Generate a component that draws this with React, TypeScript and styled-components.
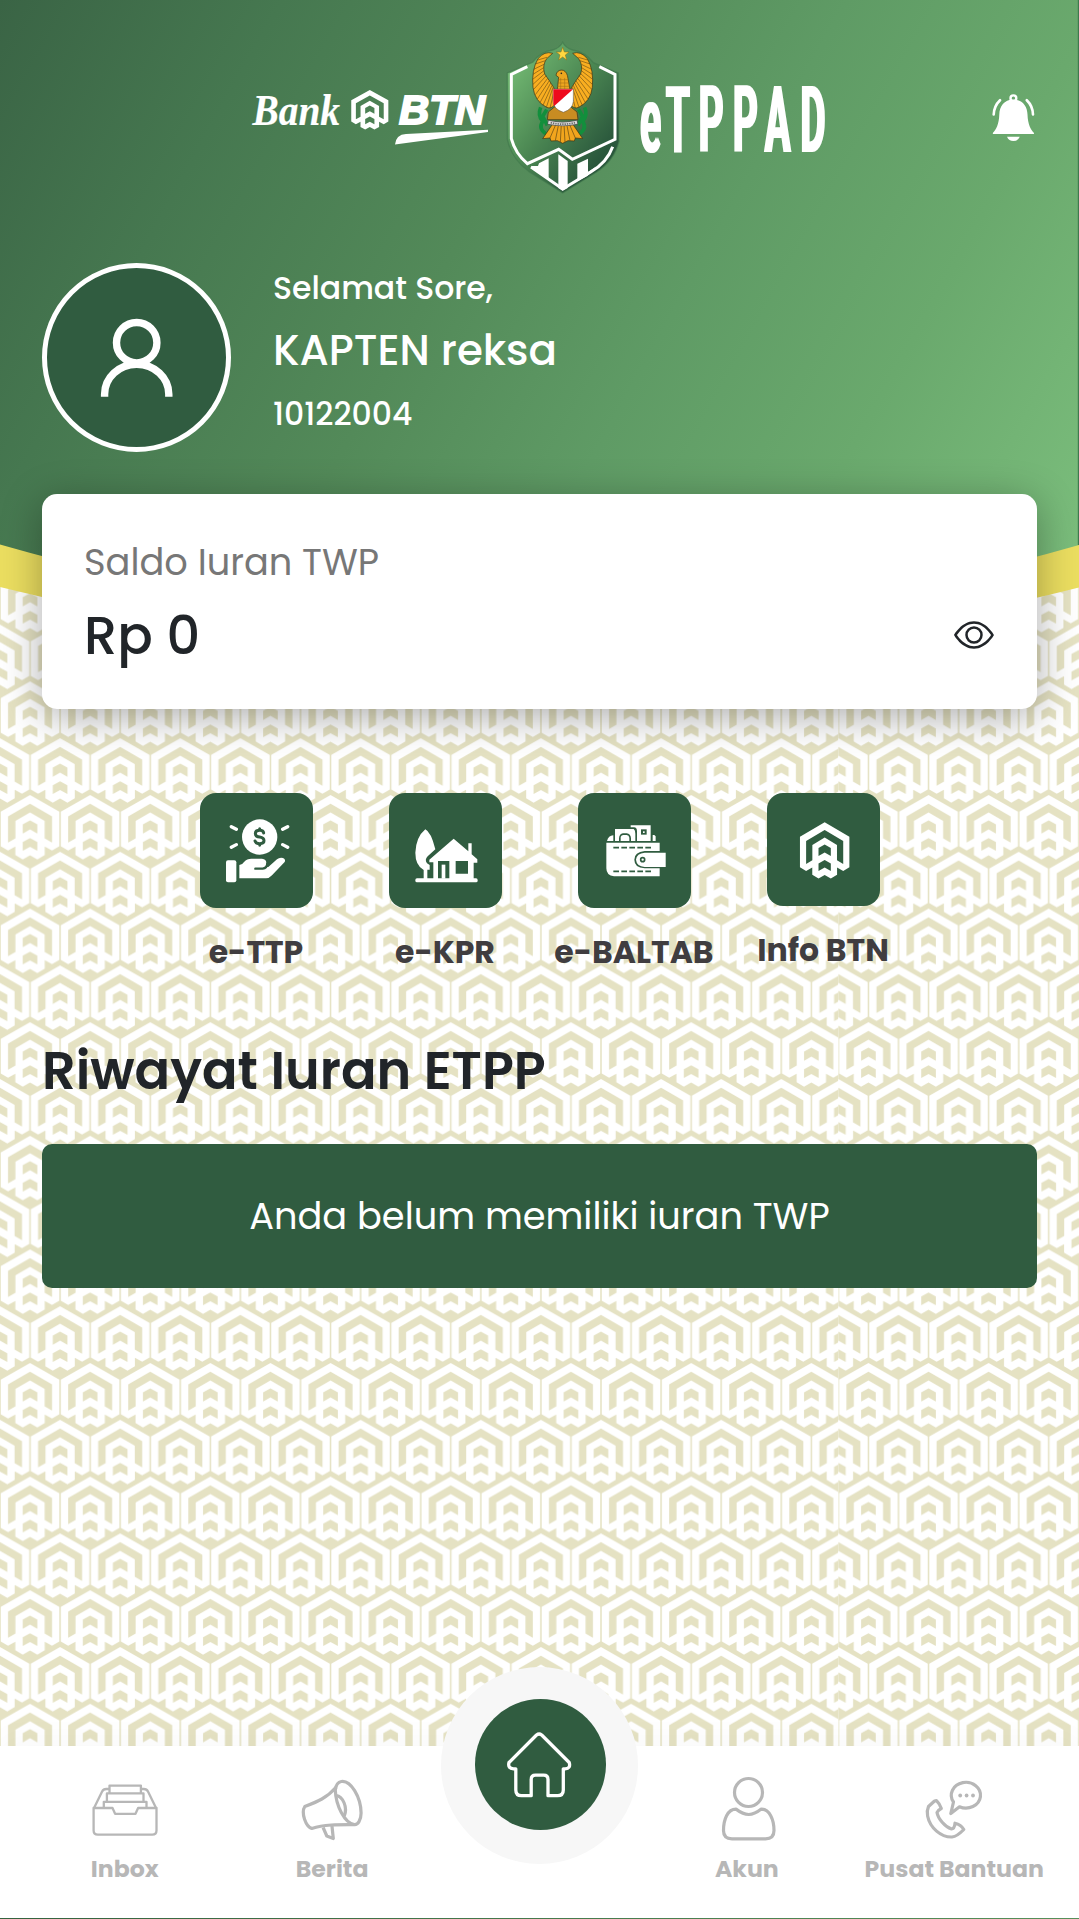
import React from "react";
import styled, { createGlobalStyle } from "styled-components";
import { BsEye } from "react-icons/bs";

const GREEN = "#305c40";

const GlobalStyle = createGlobalStyle`
  *, *::before, *::after { box-sizing: border-box; }
  body {
    margin: 0;
    font-family: Poppins, Inter, "Liberation Sans", sans-serif;
    color: #212529;
  }
  svg { display: block; }
`;

const Page = styled.div`
  position: relative;
  width: 1079px;
  height: 1919px;
  overflow: hidden;
  display: flex;
  flex-direction: column;
`;

const Backdrop = styled.svg`
  position: absolute;
  inset: 0;
`;

const Content = styled.div`
  position: relative;
  flex: 1;
  display: flex;
  flex-direction: column;
  padding: 0 42px;
`;

const TopBar = styled.header`
  height: 236px;
  display: grid;
  grid-template-columns: 1fr auto 1fr;
  align-items: center;
`;

const BellButton = styled.button`
  grid-column: 3;
  justify-self: end;
  margin-right: 2.5px;
  padding: 0;
  border: 0;
  background: none;
`;

const Brand = styled.div`
  grid-column: 2;
  margin: 0 1px 0 -1px;
`;

const Profile = styled.section`
  display: flex;
  gap: 42px;
  margin-top: 26.7px;
  height: 189px;
`;

const Avatar = styled.div`
  width: 189px;
  height: 189px;
  border-radius: 50%;
  border: 5px solid #fff;
  background: ${GREEN};
`;

const ProfileText = styled.div`
  display: flex;
  flex-direction: column;
  align-items: flex-start;
  padding-top: 2.3px;
  color: #fff;
`;

const Text = styled.span<{ $size: number; $line: number; $weight?: number; $top?: number; $color?: string }>`
  display: block;
  width: max-content;
  white-space: nowrap;
  font-size: ${(p) => p.$size}px;
  line-height: ${(p) => p.$line}px;
  font-weight: ${(p) => p.$weight ?? 400};
  margin-top: ${(p) => p.$top ?? 0}px;
  color: ${(p) => p.$color ?? "inherit"};
`;

const BalanceCard = styled.section`
  display: flex;
  justify-content: space-between;
  margin-top: 42px;
  height: 215px;
  padding: 41.3px 43.5px 0 42px;
  border-radius: 15px;
  background: #fff;
  box-shadow: 0 8px 42px rgba(0, 0, 0, 0.33);
`;

const EyeButton = styled.button`
  align-self: flex-start;
  margin-top: 80.5px;
  padding: 0;
  border: 0;
  background: none;
  color: #212529;
`;

const Shortcuts = styled.nav`
  display: flex;
  justify-content: center;
  margin-top: 84px;
`;

const Shortcut = styled.a`
  width: 189px;
  display: flex;
  flex-direction: column;
  align-items: center;
  color: #403d40;
`;

const Tile = styled.div<{ $height: number }>`
  width: 113px;
  height: ${(p) => p.$height}px;
  border-radius: 16px;
  background: ${GREEN};
`;

const Notice = styled.div`
  display: flex;
  align-items: center;
  justify-content: center;
  margin-top: 42.6px;
  height: 143.6px;
  border-radius: 10px;
  background: ${GREEN};
  color: #fff;
`;

const BottomNav = styled.nav`
  position: relative;
  display: grid;
  grid-template-columns: repeat(5, 1fr);
  height: 172px;
  padding: 30px 21px 0;
  background: #fff;
  color: #b7b7b7;
  box-shadow: 0 -6px 30px rgba(0, 0, 0, 0.03);
`;

const NavItem = styled.a`
  display: flex;
  flex-direction: column;
  align-items: center;
`;

const HomeBump = styled.a`
  display: flex;
  align-items: center;
  justify-content: center;
  justify-self: center;
  margin-top: -109px;
  padding: 0 0 2.5px 2.5px;
  width: 197px;
  height: 197px;
  border-radius: 50%;
  background: #f7f7f7;
`;

const HomeDisc = styled.div`
  display: flex;
  align-items: center;
  justify-content: center;
  padding-right: 3px;
  width: 131.5px;
  height: 131.5px;
  border-radius: 50%;
  background: ${GREEN};
`;

const BottomEdge = styled.div`
  position: relative;
  height: 1px;
  background: linear-gradient(90deg, #35633f, #57905a);
`;

const HIVE =
  "M0 0L29.3 16.7V51.3L22 55.6L14.7 51.6V60L7.3 64.4L0 60.3L-7.3 64.4L-14.7 60V51.6L-22 55.6L-29.3 51.3V16.7Z" +
  "M0 8.8L22 21.5V47.6L14.6 43.3V26L0 17.4L-14.6 26V43.3L-22 47.6V21.5Z" +
  "M0 25.4L7.3 29.4V38.5L0 34.5L-7.3 38.5V29.4Z" +
  "M0 43.2L7.3 47.2V55.8L0 51.8L-7.3 55.8V47.2Z";

const Hive = ({ transform }: { transform?: string }) => (
  <path d={HIVE} fillRule="evenodd" fill="#fff" transform={transform} />
);

const HivePattern = ({ id, x }: { id: string; x: number }) => (
  <pattern id={id} width="60.1" height="113.6" patternUnits="userSpaceOnUse" patternTransform={`translate(${x} 56.6)`}>
    <rect width="60.1" height="113.6" fill="#e5e2c3" />
    <Hive />
    <Hive transform="translate(60.1 0)" />
    <Hive transform="translate(30.05 56.8)" />
    <Hive transform="translate(30.05 -56.8)" />
  </pattern>
);

const PageBackdrop = () => (
  <Backdrop width="1079" height="1919" viewBox="0 0 1079 1919">
    <defs>
      <HivePattern id="hiveA" x={0} />
      <HivePattern id="hiveB" x={838.4} />
      <linearGradient id="sky" gradientUnits="userSpaceOnUse" x1="0" y1="0" x2="1079" y2="600">
        <stop offset="0" stopColor="#3a6445" />
        <stop offset="0.2" stopColor="#467850" />
        <stop offset="0.42" stopColor="#538a59" />
        <stop offset="0.6" stopColor="#5f9b65" />
        <stop offset="0.78" stopColor="#6aa96d" />
        <stop offset="1" stopColor="#7cbf7d" />
      </linearGradient>
    </defs>
    <rect width="838.4" height="1919" fill="url(#hiveA)" />
    <rect x="838.4" width="240.6" height="1919" fill="url(#hiveB)" />
    <path d="M0 0H1079V587.5Q540 724 0 587Z" fill="#ebde60" />
    <path d="M0 0H1079V545Q540 700 0 544.5Z" fill="url(#sky)" />
    <path d="M1078.4 0V545" stroke="#3f7a4e" strokeWidth="1.2" />
  </Backdrop>
);

const Wing = () => (
  <g>
    <path
      d="M158 46Q134 38 114 62Q94 96 99 148Q104 190 140 208Q154 214 164 200L162 150Q150 130 134 108Q126 82 140 62Z"
      fill="#f9ae20"
      stroke="#3b3012"
      strokeWidth="2"
    />
    <path
      d="M141 58L113 66M136 68L106 78M132 79L101 94M131 89L99 109M132 98L98 124M135 106L99 139M139 113L101 154M143 121L106 170M148 128L112 183M152 135L120 194M156 142L129 202M159 148L139 208M162 160L150 211"
      stroke="#5a4414"
      strokeWidth="1.7"
      fill="none"
    />
  </g>
);

const Crest = () => (
  <g transform="translate(500 38) scale(.33333)">
    <defs>
      <linearGradient id="crest" x1="0" y1="0" x2="1" y2="1">
        <stop offset="0.1" stopColor="#72b872" />
        <stop offset="0.45" stopColor="#4c8853" />
        <stop offset="0.8" stopColor="#2a573c" />
      </linearGradient>
    </defs>
    <path
      d="M188 13Q196 30 218 36Q255 42 280 74L355 105L357 310Q343 368 290 402L188 465L86 400Q34 362 22 303V105L98 73Q120 42 158 36Q180 30 188 13Z"
      fill="url(#crest)"
      stroke="#3f764b"
      strokeOpacity=".6"
      strokeWidth="4"
    />
    <g fill="none" stroke="#fff" strokeWidth="9">
      <path d="M82 86L34 109V302Q46 347 82 377L176 334L217 364L345 304V109L298 86" />
      <path d="M338 326Q322 372 272 402L188 453L93 387" />
    </g>
    <g fill="#fff">
      <path d="M92 384H114L117 376L146 361V424Z" />
      <path d="M175 349L203 369V450L188 458L175 450Z" />
      <path d="M232 377L264 362V402L290 385L262 414L232 430Z" />
    </g>
    <g fill="none" stroke="#128f3c" strokeWidth="11">
      <path d="M122 208Q112 232 128 250Q114 272 138 288M140 215L128 235L142 262" />
      <path d="M254 208Q264 232 248 250Q262 272 238 288M236 215L248 235L234 262" />
    </g>
    <Wing />
    <g transform="matrix(-1 0 0 1 376 0)">
      <Wing />
    </g>
    <path d="M170 105Q176 94 190 97Q202 102 204 122L210 155H172L176 118L168 112Z" fill="#eda61f" stroke="#3b3012" strokeWidth="2" />
    <circle cx="184" cy="106" r="2.5" fill="#222" />
    <path d="M174 125H204M173 135H206M172 145H208M182 120V153M194 120V153" stroke="#a06c14" strokeWidth="1.6" />
    <path d="M166 205L145 222L142 245H234L231 222L210 205Z" fill="#c88c22" stroke="#3b3012" strokeWidth="2" />
    <path d="M160 255L128 302L150 300L153 309L172 308L188 316L204 308L223 309L226 300L248 302L216 255Z" fill="#f2a51d" stroke="#3b3012" strokeWidth="2" />
    <path d="M168 258L150 300M176 258L166 308M184 258L181 312M192 258L195 312M200 258L210 308M208 258L226 300" stroke="#5a4212" strokeWidth="2" />
    <path d="M143 253Q188 263 233 253" fill="none" stroke="#5b5b5b" strokeWidth="14" />
    <path d="M145 253Q188 263 231 253" fill="none" stroke="#d9d9d9" strokeWidth="9" />
    <path d="M152 254Q188 263 225 254" fill="none" stroke="#6c6c6c" strokeWidth="5" strokeDasharray="4 3" />
    <path d="M159 153H220V190Q218 214 190 223Q161 214 159 190Z" fill="#fff" stroke="#555" strokeWidth="1.5" />
    <path d="M160 154H219L162 205Q160 198 160 190Z" fill="#ee0a1c" />
    <path d="M188 28L193 42L207 42L196 51L200 66L188 57L176 66L180 51L169 42L183 42Z" fill="#ffd740" stroke="#8a6a14" strokeWidth="1.5" />
  </g>
);

const BrandLogo = () => (
  <svg width="578" height="160" viewBox="250 38 578 160">
    <defs>
      <filter id="heavyStems" x="-5%" y="-5%" width="110%" height="110%">
        <feMorphology operator="dilate" radius="1 0" />
      </filter>
    </defs>
    <g fill="#fff" stroke="#fff">
      <text x="252.5" y="124.8" fontFamily="Liberation Serif, serif" fontStyle="italic" fontWeight="700" fontSize="45" strokeWidth="0.2" textLength="87.5" lengthAdjust="spacingAndGlyphs">
        Bank
      </text>
      <text x="399" y="124" fontFamily="Liberation Sans, sans-serif" fontStyle="italic" fontWeight="700" fontSize="41" strokeWidth="2" textLength="86" lengthAdjust="spacingAndGlyphs">
        BTN
      </text>
    </g>
    <path d="M395 144.6Q396 134.5 406 134L488 129.8V132Z" fill="#fff" />
    <Hive transform="translate(369.8 90) scale(.633 .615)" />
    <Crest />
    <g filter="url(#heavyStems)">
      <g transform="translate(0 152) scale(.415 1)">
        <text
          x="1543 1605 1684 1766 1843 1929"
          y="0"
          fontFamily="Roboto, sans-serif"
          fontWeight="700"
          fontSize="92.5"
          fill="#fff"
        >
          eTPPAD
        </text>
      </g>
    </g>
  </svg>
);

const BellIcon = () => (
  <svg width="43" height="48" viewBox="992 94.5 43 48" fill="none" stroke="#fff" strokeLinecap="round">
    <circle cx="1013.4" cy="98.8" r="2.9" strokeWidth="2.4" />
    <path d="M1013.4 100C1004 100 999.5 107 999.3 115C999 125 996 130 993 133.2Q992.4 134.6 993.5 134.6H1033.3Q1034.4 134.6 1033.8 133.2C1030.8 130 1027.8 125 1027.5 115C1027.3 107 1022.8 100 1013.4 100Z" fill="#fff" stroke="none" />
    <path d="M1007 137.3H1019.8Q1018 141.6 1013.4 141.6Q1008.8 141.6 1007 137.3Z" fill="#fff" stroke="none" />
    <path d="M1000 100.7Q994 106.5 993.7 115M1026.8 100.7Q1032.8 106.5 1033 115" strokeWidth="2.6" />
  </svg>
);

const PersonIcon = () => (
  <svg width="179" height="179" viewBox="47 267.3 179 179" fill="none" stroke="#fff" strokeWidth="7.4">
    <circle cx="136.7" cy="342" r="20.2" />
    <path d="M104.6 396V393.5A32.1 30 0 0 1 168.8 393.5V396" />
  </svg>
);

const HandCoinIcon = () => (
  <svg width="113" height="115.3" viewBox="59 68 339 346" fill="#fff">
    <circle cx="238" cy="200" r="53" />
    <g fill="none" stroke={GREEN} strokeWidth="9" strokeLinecap="round">
      <path d="M250 188Q249 180 238 180Q225 180 225 189.5Q225 199 238 200Q251 202 251 211.5Q251 220 238 220Q226 220 224 212M238 175V179M238 221V225" />
    </g>
    <path d="M153 169L168 177M322 169L307 177M153 231L168 223M322 231L307 223" stroke="#fff" strokeWidth="10" strokeLinecap="round" />
    <rect x="137" y="270" width="31" height="66" rx="6" />
    <path d="M177 284Q187 282 191 275Q200 265 213 265H245Q258 267 258 277L257 290H264L290 267Q298 260 308 263Q317 267 313 275L275 315Q267 324 257 324H177Z" />
    <path d="M225 295H247Q260 293 261 280" fill="none" stroke={GREEN} strokeWidth="7" strokeLinecap="round" />
  </svg>
);

const HouseTreeIcon = () => (
  <svg width="113" height="115.3" viewBox="626 68 339 346" fill="#fff">
    <rect x="705" y="324" width="187" height="12" rx="5" />
    <path d="M735 177Q752 185 765 237L742 258Q732 268 740 279L748 284V298H741V326H730V299Q705 285 705 247Q707 200 735 177Z" />
    <path d="M820 205L864 243V219H874V252L891 267V277H880V326H759V276H747V268Z" />
    <path d="M826 272H863V310H826ZM773 272H807V324H773Z" fill={GREEN} />
    <rect x="784" y="283" width="11" height="42" />
  </svg>
);

const WalletIcon = () => (
  <svg width="113" height="115.3" viewBox="112 68 339 346" fill="#fff">
    <path d="M197 217H357V242H312Q281 245 281 268Q281 292 312 294H357V318H220Q197 316 197 294Z" />
    <path d="M312 247H375V290H312Q288 288 286 268Q288 249 312 247Z" />
    <circle cx="306" cy="268" r="6" fill="none" stroke={GREEN} strokeWidth="5" />
    <path d="M218 232H331M218 303H331" stroke={GREEN} strokeWidth="5" strokeDasharray="17 7" />
    <path d="M199 212Q203 196 218 195V212Z" />
    <path d="M223 176H279Q284 180 284 190V212H271V204Q270 190 258 189H247Q236 190 235 204V212H223Z" />
    <path d="M240 212V200Q242 194 248 194H258Q265 195 266 202V212Z" />
    <path d="M270 165H330V212H289V183Q289 171 280 171H270Z" />
    <path d="M301 177H318V193H301Z" fill={GREEN} />
    <rect x="307" y="183" width="5" height="5" />
    <path d="M336 194H341L345 198V212H336Z" />
  </svg>
);

const InfoIcon = () => (
  <svg width="113" height="113" viewBox="679 68 339 338">
    <Hive transform="translate(852 155) scale(2.53 2.63)" />
  </svg>
);

const NavIcon = styled.svg.attrs({ width: 66, height: 66 })`
  fill: none;
  stroke: #b7b7b7;
  stroke-linejoin: round;
`;

const InboxIcon = () => (
  <NavIcon viewBox="91.7 1776 66 66" strokeWidth="2.3">
    <path d="M93.3 1808V1830.5Q93.3 1834.7 97.5 1834.7H152Q156.2 1834.7 156.2 1830.5V1808H137.8L135.2 1813.8H114.8L112.2 1808Z" />
    <path d="M93.5 1808.5L101.8 1791.5Q103 1789 106 1789H108.8M156 1808.5L147.7 1791.5Q146.5 1789 143.5 1789H140.8" />
    <path d="M109.2 1793.3V1785.6H140.6V1793.3M106.6 1801V1793.4H143.2V1801M103.5 1808V1801.8H146.2V1808" />
  </NavIcon>
);

const MegaphoneIcon = () => (
  <NavIcon viewBox="299.2 1776 66 66" strokeWidth="3.2">
    <path d="M341.5 1781.5C351 1780 361 1797 361.3 1813C361.3 1820 358 1825 354.5 1824.6C345 1823 336 1806 335.5 1790C336 1786 338 1782 341.5 1781.5Z" />
    <path d="M336.5 1795.5C343 1796.5 348 1807 344.5 1816" />
    <path d="M336.5 1787C327 1798 318 1801.5 305 1806.5C301 1813 306 1826.5 312 1828.5C324 1824.5 338 1824.5 354 1824.6" />
    <path d="M323.3 1827.5L327 1836L333.5 1838.5L332 1824.5" />
  </NavIcon>
);

const UserIcon = () => (
  <NavIcon viewBox="713.5 1775.5 66 66" strokeWidth="3.2">
    <circle cx="748" cy="1792" r="14" />
    <path d="M735.5 1808.6C727 1808.6 723 1819 723 1830Q723 1838.3 731.5 1838.3H765Q773.5 1838.3 773.5 1830C773.5 1819 769 1808.6 760.8 1808.6C756.5 1812 752 1814 748.2 1814C744 1814 740 1812 735.5 1808.6Z" />
  </NavIcon>
);

const SupportIcon = () => (
  <NavIcon viewBox="921 1776 66 66" strokeWidth="3.2">
    <path d="M953.5 1802A14.6 12.9 0 1 1 959.5 1806.8L950.8 1813.5Z" />
    <path d="M934.5 1801L928.5 1806.5Q926.5 1811 927.6 1816C930 1828 941 1837.3 952 1837Q957 1836.5 963.8 1829.5Q961 1824.5 955 1823.2Q954.5 1829 951.5 1829C945 1827 938 1818.5 937 1812.5Q938 1810 941.3 1808.5Q940 1804 936.5 1800.6Z" />
    <g fill="#b7b7b7" stroke="none">
      <circle cx="960.2" cy="1795.5" r="1.9" />
      <circle cx="966.6" cy="1795.5" r="1.9" />
      <circle cx="973" cy="1795.5" r="1.9" />
    </g>
  </NavIcon>
);

const HomeIcon = () => (
  <svg width="70" height="70" viewBox="504.5 1729.5 70 70" fill="none" stroke="#fff" strokeWidth="3.3" strokeLinejoin="round">
    <path d="M537 1735.5Q539.6 1733.5 542.2 1735.5L569.7 1763Q571.5 1769 565.5 1769.3H563.8V1790.5Q563.8 1796.2 558 1796.2H548.5V1780Q548.5 1775.7 544.2 1775.7H536Q531.7 1775.7 531.7 1780V1796.2H522Q516.3 1796.2 516.3 1790.5V1769.3H514Q508 1769 509.5 1763Z" />
  </svg>
);

const SHORTCUTS = [
  { label: "e-TTP", height: 115.3, icon: <HandCoinIcon /> },
  { label: "e-KPR", height: 115.3, icon: <HouseTreeIcon /> },
  { label: "e-BALTAB", height: 115.3, icon: <WalletIcon /> },
  { label: "Info BTN", height: 113, icon: <InfoIcon /> },
];

const NAV_LEFT = [
  { label: "Inbox", icon: <InboxIcon /> },
  { label: "Berita", icon: <MegaphoneIcon /> },
];

const NAV_RIGHT = [
  { label: "Akun", icon: <UserIcon /> },
  { label: "Pusat Bantuan", icon: <SupportIcon /> },
];

const renderNav = (items: typeof NAV_LEFT) =>
  items.map((item) => (
    <NavItem key={item.label}>
      {item.icon}
      <Text $size={23.625} $line={36} $weight={700} $top={9}>
        {item.label}
      </Text>
    </NavItem>
  ));

export default function App() {
  return (
    <Page>
      <GlobalStyle />
      <PageBackdrop />
      <Content>
        <TopBar>
          <Brand>
            <BrandLogo />
          </Brand>
          <BellButton aria-label="Notifikasi">
            <BellIcon />
          </BellButton>
        </TopBar>
        <Profile>
          <Avatar>
            <PersonIcon />
          </Avatar>
          <ProfileText>
            <Text $size={31.5} $line={47} $weight={500}>Selamat Sore,</Text>
            <Text $size={42} $line={63} $weight={500} $top={7.4}>KAPTEN reksa</Text>
            <Text $size={31.5} $line={47} $weight={500} $top={8.6}>10122004</Text>
          </ProfileText>
        </Profile>
        <BalanceCard>
          <div>
            <Text $size={36.75} $line={55} $color="#777">Saldo Iuran TWP</Text>
            <Text $size={52.5} $line={63} $weight={500} $top={14.2}>Rp 0</Text>
          </div>
          <EyeButton aria-label="Tampilkan saldo">
            <BsEye size={40} />
          </EyeButton>
        </BalanceCard>
        <Shortcuts>
          {SHORTCUTS.map((s) => (
            <Shortcut key={s.label}>
              <Tile $height={s.height}>{s.icon}</Tile>
              <Text $size={31.5} $line={47} $weight={700} $top={20.9}>
                {s.label}
              </Text>
            </Shortcut>
          ))}
        </Shortcuts>
        <Text $size={52.5} $line={63} $weight={600} $top={62.8}>Riwayat Iuran ETPP</Text>
        <Notice>
          <Text $size={36.75} $line={55}>Anda belum memiliki iuran TWP</Text>
        </Notice>
      </Content>
      <BottomNav>
        {renderNav(NAV_LEFT)}
        <HomeBump aria-label="Beranda">
          <HomeDisc>
            <HomeIcon />
          </HomeDisc>
        </HomeBump>
        {renderNav(NAV_RIGHT)}
      </BottomNav>
      <BottomEdge />
    </Page>
  );
}
